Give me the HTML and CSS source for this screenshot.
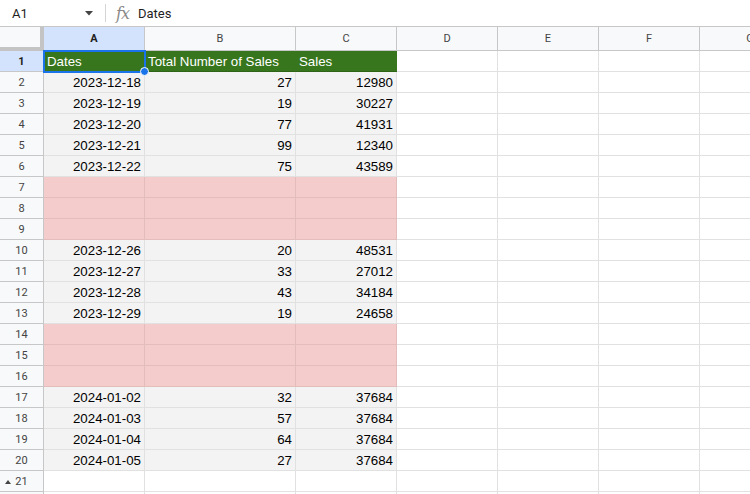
FILE: index.html
```html
<!DOCTYPE html>
<html>
<head>
<meta charset="utf-8">
<link rel="stylesheet" href="styles.css">
</head>
<body>
<div class="fbar">
  <div class="namebox">A1</div>
  <svg class="caret" width="8" height="5" viewBox="0 0 8 5"><path d="M0 0h8L4 4.5z" fill="#444"/></svg>
  <div class="fsep"></div>
  <div class="fx">fx</div>
  <div class="fval">Dates</div>
</div>
<div class="sheet" id="sheet"></div>
<script src="app.js"></script>
</body>
</html>
```
FILE: app.js
```js
const rows = [
  ["2023-12-18", 27, 12980],
  ["2023-12-19", 19, 30227],
  ["2023-12-20", 77, 41931],
  ["2023-12-21", 99, 12340],
  ["2023-12-22", 75, 43589],
  null, null, null,
  ["2023-12-26", 20, 48531],
  ["2023-12-27", 33, 27012],
  ["2023-12-28", 43, 34184],
  ["2023-12-29", 19, 24658],
  null, null, null,
  ["2024-01-02", 32, 37684],
  ["2024-01-03", 57, 37684],
  ["2024-01-04", 64, 37684],
  ["2024-01-05", 27, 37684]
];
const s = document.getElementById('sheet');
function cell(cls, txt) {
  const d = document.createElement('div');
  d.className = 'c ' + cls;
  if (txt !== undefined) d.textContent = txt;
  s.appendChild(d);
  return d;
}
cell('corner');
['A','B','C','D','E','F','G'].forEach((l, i) => cell('ch' + (i === 0 ? ' sel' : '') + (i === 6 ? ' last' : ''), l));
cell('rh sel', '1');
const a1 = cell('hd a1', 'Dates');
const dot = document.createElement('span'); dot.className = 'dot'; a1.appendChild(dot);
cell('hd', 'Total Number of Sales');
cell('hd', 'Sales');
for (let k = 0; k < 4; k++) cell('e');
rows.forEach((r, i) => {
  cell('rh', String(i + 2));
  if (r) { cell('g', r[0]); cell('g', r[1]); cell('g', r[2]); }
  else { cell('p'); cell('p'); cell('p'); }
  for (let k = 0; k < 4; k++) cell('e');
});
cell('rh r21', '21');
for (let k = 0; k < 7; k++) cell('e');
cell('rh');
for (let k = 0; k < 7; k++) cell('e');
```
FILE: styles.css
```css
html, body { margin: 0; padding: 0; background: #fff; overflow: hidden; }
body { width: 750px; height: 494px; font-family: Roboto, "Liberation Sans", Arial, sans-serif; }
.fbar {
  border-bottom: 1px solid #c7c7c7; display: flex; align-items: center;
  box-sizing: border-box; height: 27px;
}
.namebox { width: 73px; padding-left: 12px; box-sizing: border-box; font-size: 13px; color: #1f1f1f; }
.caret { margin-left: 12px; }
.fsep { width: 1px; height: 18px; background: #d5d5d5; margin-left: 12px; }
.fx { margin-left: 10px; font-family: "DejaVu Serif", serif; font-style: italic; font-size: 16px; color: #8a8a8a; letter-spacing: -1px; }
.fval { margin-left: 9px; font-size: 13px; color: #1f1f1f; }
.sheet {
  display: grid;
  grid-template-columns: 44px 101px 151px 101px 101px 101px 101px 101px;
  grid-template-rows: 24px repeat(22, 21px);
}
.c {
  box-sizing: border-box; border-right: 1px solid #e1e1e1; border-bottom: 1px solid #e1e1e1;
  font-family: "Liberation Sans", Arial, sans-serif; font-size: 13.3px; color: #000;
  white-space: nowrap; overflow: visible; line-height: 21px;
}
.corner { background: #f8f9fa; border-right: 4px solid #c4c4c4; border-bottom: 4px solid #c4c4c4; }
.ch {
  background: #f8f9fa; border-right-color: #c7c7c7; border-bottom-color: #c7c7c7;
  font-family: Roboto, sans-serif; font-size: 11px; color: #444; text-align: center; line-height: 23px;
}
.ch.last { overflow: hidden; }
.ch.sel { background: #d3e3fd; font-weight: 700; color: #1f1f1f; }
.rh {
  background: #f8f9fa; border-right-color: #c7c7c7; border-bottom-color: #c7c7c7;
  font-family: Roboto, sans-serif; font-size: 11px; color: #444; text-align: center;
}
.rh.sel { background: #d3e3fd; font-weight: 700; color: #1f1f1f; }
.r21 { position: relative; }
.r21::before {
  content: ""; position: absolute; left: 5px; top: 9px;
  border-left: 3px solid transparent; border-right: 3px solid transparent; border-bottom: 4px solid #444;
}
.hd { background: #38761d; color: #fff; padding-left: 3px; border-right-color: #38761d; border-bottom-color: #2f6418; }
.a1 { position: relative; outline: 2px solid #1a73e8; outline-offset: -1px; z-index: 2; }
.dot {
  position: absolute; right: -5px; bottom: -5px; width: 7px; height: 7px; border-radius: 50%;
  background: #1a73e8; border: 1px solid #fff;
}
.g { background: #f3f3f3; text-align: right; padding-right: 3px; }
.p { background: #f4cccc; border-right-color: #e3bcbc; border-bottom-color: #e3bcbc; }
.e { background: #fff; }
```
